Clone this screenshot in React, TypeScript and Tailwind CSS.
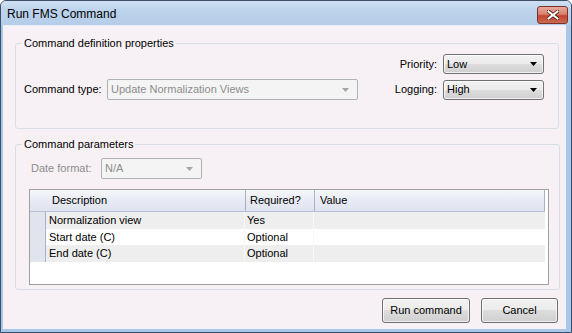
import React from "react";

function Arrow({ color }: { color: string }) {
  return (
    <svg width="7" height="4" viewBox="0 0 7 4" className="shrink-0">
      <path d="M0 0 H7 L3.5 4 Z" fill={color} />
    </svg>
  );
}

function Combo({ value, className }: { value: string; className: string }) {
  return (
    <div
      className={
        "flex items-center justify-between rounded-[3px] border border-[#707070] bg-[linear-gradient(to_bottom,#f2f2f2_0%,#ebebeb_50%,#dddddd_50%,#cfcfcf_100%)] pl-[3px] pr-[6px] shadow-[inset_0_0_0_1px_rgba(255,255,255,0.7)] " +
        className
      }
    >
      <span className="leading-none text-black">{value}</span>
      <Arrow color="#000" />
    </div>
  );
}

function DisabledCombo({ value, className }: { value: string; className: string }) {
  return (
    <div
      className={
        "flex items-center justify-between rounded-[2px] border border-[#adb2b5] bg-[#f4f4f4] pl-[3px] pr-[8px] " +
        className
      }
    >
      <span className="leading-none text-[#8d8d8d]">{value}</span>
      <Arrow color="#a5a5a5" />
    </div>
  );
}

function Btn({ label, className }: { label: string; className: string }) {
  return (
    <div
      className={
        "flex items-center justify-center rounded-[3px] border border-[#707070] bg-[linear-gradient(to_bottom,#f2f2f2_0%,#ebebeb_50%,#dddddd_50%,#cfcfcf_100%)] text-black shadow-[inset_0_0_0_1px_rgba(255,255,255,0.7)] " +
        className
      }
    >
      {label}
    </div>
  );
}

const rows = [
  { d: "Normalization view", r: "Yes", bg: "bg-[#eeeeee]" },
  { d: "Start date (C)", r: "Optional", bg: "bg-white" },
  { d: "End date (C)", r: "Optional", bg: "bg-[#eeeeee]" },
];

export default function App() {
  return (
    <div className="relative flex h-[333px] w-[572px] flex-col overflow-hidden rounded-t-[6px] border border-[#3d4f66] bg-[#a9c7e8] font-['Liberation_Sans',Arial,sans-serif] text-[11px] text-black">
      {/* title bar */}
      <div className="flex h-[24px] shrink-0 items-center justify-between bg-[linear-gradient(to_bottom,#cfe0f3_0%,#bcd3ec_40%,#b5cde8_100%)] pl-[6px] pr-[3px]">
        <span className="mt-[1px] text-[12px] leading-none text-black">Run FMS Command</span>
        <div className="mt-[3px] flex h-[18px] w-[31px] items-center justify-center rounded-[3px] border border-[#7d3128] bg-[linear-gradient(to_bottom,#e9a99d_0%,#d9826f_45%,#c3442e_55%,#c96a52_100%)]">
          <svg width="12" height="10" viewBox="0 0 12 10">
            <path
              d="M1.5 1.5 L10.5 8.5 M10.5 1.5 L1.5 8.5"
              stroke="#4a1a14"
              strokeWidth="3.6"
              strokeLinecap="square"
            />
            <path
              d="M1.5 1.5 L10.5 8.5 M10.5 1.5 L1.5 8.5"
              stroke="#ffffff"
              strokeWidth="2"
              strokeLinecap="square"
            />
          </svg>
        </div>
      </div>

      {/* client area */}
      <div className="mb-[3px] ml-[2px] mr-[5px] flex flex-1 flex-col border-t border-[#e8eef5] bg-[#f7f1f5]">
        {/* Group 1 */}
        <fieldset className="ml-[12px] mt-[10px] w-[544px] rounded-[3px] border border-[#d5dfe5] pb-[28px] pl-[8px] pr-[14px] pt-[3px]">
          <legend className="-ml-[2px] px-[2px] leading-[15px]">Command definition properties</legend>
          <div className="flex h-[20px] items-center justify-end">
            <span className="mr-[6px]">Priority:</span>
            <Combo value="Low" className="h-[20px] w-[101px]" />
          </div>
          <div className="mt-[5px] flex items-center justify-between">
            <div className="flex items-center">
              <span className="w-[83px]">Command type:</span>
              <DisabledCombo value="Update Normalization Views" className="h-[21px] w-[251px]" />
            </div>
            <div className="flex items-center">
              <span className="mr-[6px]">Logging:</span>
              <Combo value="High" className="h-[20px] w-[101px]" />
            </div>
          </div>
        </fieldset>

        {/* Group 2 */}
        <fieldset className="ml-[12px] mt-[8px] w-[544px] rounded-[3px] border border-[#d5dfe5] pb-[4px] pl-[13px] pr-[10px] pt-[6px]">
          <legend className="-ml-[7px] px-[2px] leading-[15px]">Command parameters</legend>
          <div className="ml-[2px] flex items-center">
            <span className="w-[70px] text-[#8d8d8d]">Date format:</span>
            <DisabledCombo value="N/A" className="h-[21px] w-[101px]" />
          </div>
          <div className="mt-[10px] flex h-[96px] w-[520px] flex-col border border-[#a0a0a0] bg-white">
            {/* header */}
            <div className="flex h-[22px] shrink-0">
              <div className="flex w-[515px] border-b border-[#b9c0d3] bg-[linear-gradient(to_bottom,#f6f7fb_0%,#e8ebf4_50%,#dfe3ef_100%)]">
                <div className="flex w-[216px] items-center border-r border-[#a9b2cb] pl-[22px]">Description</div>
                <div className="flex w-[69px] items-center border-r border-[#a9b2cb] pl-[4px]">Required?</div>
                <div className="flex flex-1 items-center border-r border-[#a9b2cb] pl-[5px]">Value</div>
              </div>
            </div>
            {rows.map((r, i) => (
              <div key={i} className={"flex w-[515px] " + (i === 1 ? "h-[16px]" : "h-[17px]")}>
                <div className="w-[16px] shrink-0 border-r border-[#a9b2cb] bg-[#e1e4ed]" />
                <div className={"flex flex-1 " + r.bg}>
                  <div className="flex w-[199px] items-center border-r border-[#f8f8f8] pl-[3px]">{r.d}</div>
                  <div className="flex w-[69px] items-center border-r border-[#f8f8f8] pl-[2px]">{r.r}</div>
                  <div className="flex-1" />
                </div>
              </div>
            ))}
          </div>
        </fieldset>

        {/* buttons */}
        <div className="mr-[8px] mt-[8px] flex justify-end gap-[11px]">
          <Btn label="Run command" className="h-[25px] w-[88px]" />
          <Btn label="Cancel" className="h-[25px] w-[77px]" />
        </div>
      </div>
    </div>
  );
}
